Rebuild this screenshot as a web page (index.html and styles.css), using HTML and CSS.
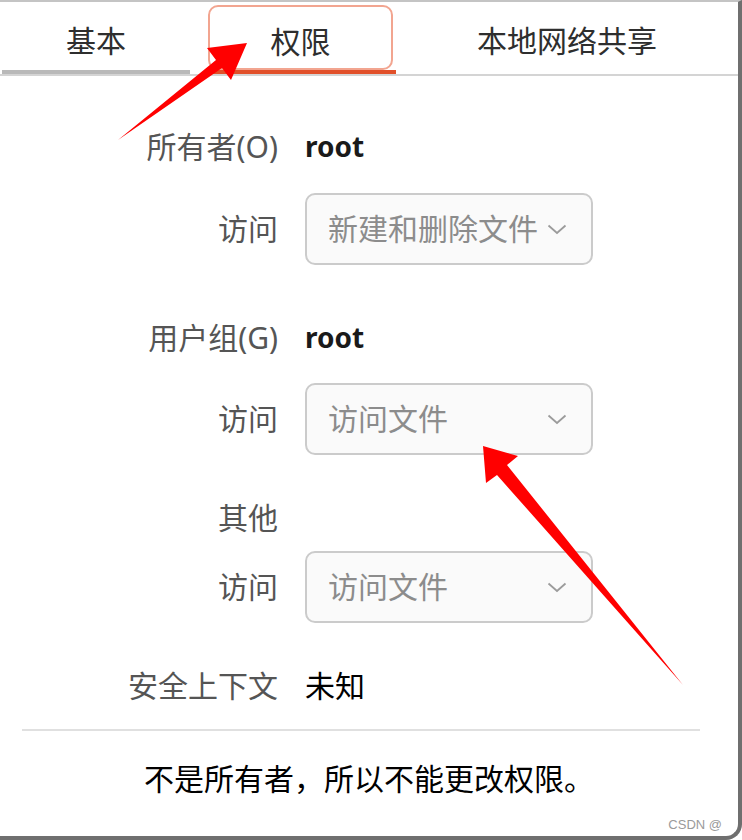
FILE: index.html
```html
<!DOCTYPE html>
<html lang="zh-CN">
<head>
<meta charset="utf-8">
<title>权限</title>
<link rel="stylesheet" href="styles.css">
</head>
<body>
<div class="window">
  <div class="tabbar">
    <div class="tab tab-basic">基本</div>
    <div class="tab tab-active"><div class="tab-focus">权限</div></div>
    <div class="tab tab-share">本地网络共享</div>
  </div>
  <div class="content">
    <div class="row">
      <span class="label">所有者(O)</span>
      <span class="value">root</span>
    </div>
    <div class="row combo-row gap-26">
      <span class="label">访问</span>
      <div class="combo"><span>新建和删除文件</span><svg class="chev" width="20" height="11" viewBox="0 0 20 11"><polyline points="1.5,1.5 10,9 18.5,1.5" fill="none" stroke="#9b9b9b" stroke-width="1.8"/></svg></div>
    </div>
    <div class="row gap-53">
      <span class="label">用户组(G)</span>
      <span class="value">root</span>
    </div>
    <div class="row combo-row gap-25">
      <span class="label">访问</span>
      <div class="combo"><span>访问文件</span><svg class="chev" width="20" height="11" viewBox="0 0 20 11"><polyline points="1.5,1.5 10,9 18.5,1.5" fill="none" stroke="#9b9b9b" stroke-width="1.8"/></svg></div>
    </div>
    <div class="row gap-43">
      <span class="label">其他</span>
    </div>
    <div class="row combo-row gap-13">
      <span class="label">访问</span>
      <div class="combo"><span>访问文件</span><svg class="chev" width="20" height="11" viewBox="0 0 20 11"><polyline points="1.5,1.5 10,9 18.5,1.5" fill="none" stroke="#9b9b9b" stroke-width="1.8"/></svg></div>
    </div>
    <div class="row gap-43">
      <span class="label">安全上下文</span>
      <span class="value value-cjk">未知</span>
    </div>
    <div class="separator"></div>
    <p class="notice">不是所有者，所以不能更改权限。</p>
  </div>
  <span class="watermark">CSDN @</span>
</div>
<svg class="arrows" width="742" height="840" viewBox="0 0 742 840">
  <polygon points="118,140 216,60 207,48 247,43 231,80 222,68" fill="#ff0000"/>
  <polygon points="683,685 507,465 518,456 483,446 486,483 497,475" fill="#ff0000"/>
</svg>
</body>
</html>
```
FILE: styles.css
```css
* { box-sizing: border-box; }

html, body {
  margin: 0;
  padding: 0;
  background: #ffffff;
}

body {
  position: relative;
  width: 742px;
  height: 840px;
  overflow: hidden;
  font-family: "Noto Sans", "Noto Sans CJK SC", sans-serif;
}

.window {
  position: relative;
  width: 742px;
  height: 840px;
  background: #ffffff;
  border-top: 2px solid #c4c4c4;
  border-right: 4px solid #6f6f6f;
  border-bottom: 4px solid #6f6f6f;
  border-bottom-right-radius: 16px;
}

.tabbar {
  display: flex;
  height: 74px;
  border-bottom: 2px solid #d4d4d4;
}

.tab {
  display: flex;
  align-items: center;
  justify-content: center;
  font-size: 30px;
  color: #2e2e2e;
  border-bottom: 4px solid transparent;
  padding-top: 6px;
}

.tab-basic {
  width: 188px;
  margin-left: 2px;
  border-bottom-color: #b9b9b9;
}

.tab-active {
  width: 192px;
  margin-left: 14px;
  border-bottom-color: #e1502a;
  padding: 3px 3px 0 4px;
  align-items: stretch;
}

.tab-focus {
  flex: 1;
  display: flex;
  align-items: center;
  justify-content: center;
  border: 2px solid #f2a590;
  border-radius: 10px;
  padding-top: 4px;
}

.tab-share {
  flex: 1;
}

.content {
  padding-top: 51px;
}

.row {
  display: flex;
  align-items: center;
  gap: 27px;
  height: 40px;
  font-size: 30px;
  line-height: 1.2;
}

.combo-row { height: 72px; }

.gap-13 { margin-top: 13px; }
.gap-25 { margin-top: 25px; }
.gap-26 { margin-top: 26px; }
.gap-43 { margin-top: 43px; }
.gap-53 { margin-top: 53px; }

.label {
  width: 278px;
  flex-shrink: 0;
  text-align: right;
  color: #555555;
}

.value {
  color: #1a1a1a;
  font-weight: 700;
  font-size: 28px;
}

.value-cjk {
  font-size: 30px;
  font-weight: 400;
  color: #000000;
}

.combo {
  width: 288px;
  height: 72px;
  display: flex;
  align-items: center;
  justify-content: space-between;
  padding: 0 24px 0 21px;
  border: 2px solid #cbcbcb;
  border-radius: 10px;
  background: #fafafa;
  color: #8c8c8c;
  font-size: 30px;
}

.chev { display: block; }

.separator {
  margin: 23px 38px 0 22px;
  height: 2px;
  background: #e0e0e0;
}

.notice {
  margin: 28px 0 0 0;
  height: 40px;
  line-height: 40px;
  text-align: center;
  font-size: 30px;
  font-weight: 400;
  color: #000000;
}

.watermark {
  position: absolute;
  right: 16px;
  bottom: 4px;
  font-family: "Liberation Sans", sans-serif;
  font-size: 13px;
  color: #9a9a9a;
}

.arrows {
  position: absolute;
  left: 0;
  top: 0;
  pointer-events: none;
}
```
